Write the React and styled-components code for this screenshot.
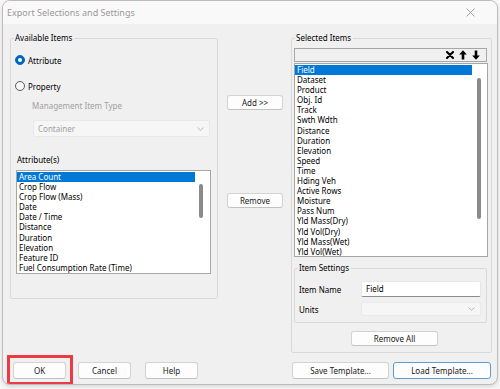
import React from 'react';
import styled, { createGlobalStyle } from 'styled-components';

const GlobalStyle = createGlobalStyle`
  html, body {
    margin: 0;
    padding: 0;
    background: #f7f7f7;
  }
  body {
    font-family: "Noto Sans", "Liberation Sans", sans-serif;
    font-size: 8px;
    color: #000;
  }
  * {
    box-sizing: border-box;
  }
`;

const Desktop = styled.div`
  width: 500px;
  height: 389px;
  overflow: hidden;
`;

const Window = styled.div`
  margin-left: 2px;
  width: 496px;
  height: 385px;
  border: 1px solid #bcbcbc;
  border-radius: 8px;
  background: #f0f0f0;
  overflow: hidden;
  display: flex;
  flex-direction: column;
  box-shadow: 0 2px 4px rgba(0, 0, 0, 0.12);
`;

const TitleBar = styled.div`
  height: 23px;
  flex: none;
  background: #f9f9f9;
  display: flex;
  align-items: center;
  justify-content: space-between;
  padding: 0 22px 0 4px;
`;

const Title = styled.span`
  font-size: 9px;
  color: #9a9a9a;
`;

const Body = styled.div`
  display: flex;
  flex-direction: column;
  padding: 8px 5px 0 7px;
`;

const Columns = styled.div`
  display: flex;
  align-items: flex-start;
`;

const Group = styled.fieldset`
  margin: 0;
  margin-left: ${({ $ml }) => $ml || 0}px;
  margin-top: ${({ $mt }) => $mt || 0}px;
  padding: 0;
  width: ${({ $w }) => $w}px;
  height: ${({ $h }) => $h}px;
  border: 1px solid #d9d9d9;
  border-radius: 2px;
  display: flex;
  flex-direction: column;
  min-width: 0;
`;

const Legend = styled.legend`
  margin-left: 3px;
  padding: 0 2px 0 1px;
  line-height: 12px;
  font-size: 8px;
`;

const RadioRow = styled.label`
  display: flex;
  align-items: center;
  gap: 3px;
  height: 12px;
  margin-top: ${({ $mt }) => $mt}px;
  padding-left: 4px;
`;

const RadioDot = styled.span`
  width: 10px;
  height: 10px;
  border-radius: 50%;
  flex: none;
  background: ${({ $on }) => ($on ? '#0067c0' : '#f7f7f7')};
  border: 1px solid ${({ $on }) => ($on ? '#0067c0' : '#5a5a5a')};
  display: flex;
  align-items: center;
  justify-content: center;
  &::after {
    content: '';
    display: ${({ $on }) => ($on ? 'block' : 'none')};
    width: 4px;
    height: 4px;
    border-radius: 50%;
    background: #fff;
  }
`;

const Caption = styled.div`
  height: 12px;
  line-height: 12px;
  margin-top: ${({ $mt }) => $mt}px;
  padding-left: ${({ $pl }) => $pl}px;
  color: ${({ $muted }) => ($muted ? '#a0a0a0' : '#000')};
`;

const Combo = styled.div`
  margin-top: ${({ $mt }) => $mt || 0}px;
  margin-left: ${({ $ml }) => $ml || 0}px;
  width: ${({ $w }) => $w}px;
  height: ${({ $h }) => $h}px;
  flex: none;
  background: #f6f6f6;
  border: 1px solid #e9e9e9;
  border-radius: 2px;
  display: flex;
  align-items: center;
  justify-content: space-between;
  padding: 0 5px 0 4px;
  color: #a0a0a0;
`;

const ListBox = styled.div`
  margin-top: ${({ $mt }) => $mt}px;
  margin-left: ${({ $ml }) => $ml}px;
  width: ${({ $w }) => $w}px;
  height: ${({ $h }) => $h}px;
  flex: none;
  background: #fff;
  border: 1px solid #a6a6a6;
  display: flex;
  overflow: hidden;
`;

const Items = styled.div`
  flex: 1;
  padding-top: 1px;
  min-width: 0;
`;

const Item = styled.div`
  height: 10.1px;
  line-height: 10.1px;
  padding-left: 2px;
  white-space: nowrap;
  background: ${({ $sel }) => ($sel ? '#0078d7' : 'transparent')};
  color: ${({ $sel }) => ($sel ? '#fff' : '#000')};
`;

const ScrollTrack = styled.div`
  width: 15px;
  flex: none;
`;

const Thumb = styled.div`
  width: 4px;
  margin-left: ${({ $ml }) => $ml}px;
  margin-top: ${({ $top }) => $top}px;
  height: ${({ $h }) => $h}px;
  border-radius: 2px;
  background: #8a8a8a;
`;

const MidCol = styled.div`
  width: 56px;
  margin-left: 9px;
  display: flex;
  flex-direction: column;
`;

const Button = styled.button`
  margin: 0;
  margin-top: ${({ $mt }) => $mt || 0}px;
  margin-left: ${({ $ml }) => $ml || 0}px;
  width: ${({ $w }) => $w}px;
  height: ${({ $h }) => $h || 17}px;
  padding: 0;
  flex: none;
  background: #fdfdfd;
  border: 1px solid ${({ $focus }) => ($focus ? '#5a9bdc' : '#d3d3d3')};
  border-bottom-color: ${({ $focus }) => ($focus ? '#5a9bdc' : '#c2c2c2')};
  border-radius: 3px;
  font-family: inherit;
  font-size: 8px;
  color: #1b1b1b;
`;

const Toolbar = styled.div`
  margin-top: 4px;
  margin-left: 2px;
  width: 193px;
  height: 14px;
  border: 1px solid #a6a6a6;
  display: flex;
  align-items: center;
  justify-content: flex-end;
  gap: 5px;
  padding-right: 6px;
`;

const FieldRow = styled.div`
  display: flex;
  align-items: center;
  margin-top: ${({ $mt }) => $mt}px;
  padding-left: 4px;
`;

const FieldLabel = styled.span`
  width: 62px;
  flex: none;
`;

const TextInput = styled.div`
  width: 120px;
  height: 16px;
  background: #fff;
  border: 1px solid #e6e6e6;
  border-bottom-color: #8c8c8c;
  border-radius: 2px;
  padding: 1px 0 0 4px;
  line-height: 11px;
`;

const Footer = styled.div`
  margin-top: 9px;
  display: flex;
  justify-content: space-between;
  padding-right: 1px;
`;

const ButtonSet = styled.div`
  display: flex;
  align-items: center;
`;

const Highlighted = styled.div`
  position: relative;
  margin-left: 3px;
  &::after {
    content: '';
    position: absolute;
    inset: -7px -7px -6px -6px;
    border: 3px solid #ec3b43;
    pointer-events: none;
  }
`;

const Chevron = () => (
  <svg width="7" height="4" viewBox="0 0 7 4">
    <path d="M0.5 0.5 L3.5 3.3 L6.5 0.5" fill="none" stroke="#b0b0b0" strokeWidth="0.9" />
  </svg>
);

const CloseIcon = () => (
  <svg width="9" height="9" viewBox="0 0 9 9">
    <path d="M0.5 0.5 L8.5 8.5 M8.5 0.5 L0.5 8.5" stroke="#9a9a9a" strokeWidth="0.9" />
  </svg>
);

const DeleteIcon = () => (
  <svg width="8" height="8" viewBox="0 0 8 8">
    <path d="M1 1 L7 7 M7 1 L1 7" stroke="#000" strokeWidth="2.1" strokeLinecap="round" />
  </svg>
);

const ArrowIcon = ({ down }) => (
  <svg width="8" height="10" viewBox="0 0 8 10" style={down ? { transform: 'rotate(180deg)' } : undefined}>
    <path d="M4 0.3 L7.8 4.6 L5.3 4.6 L5.3 9.6 L2.7 9.6 L2.7 4.6 L0.2 4.6 Z" fill="#000" />
  </svg>
);

const attributes = [
  'Area Count',
  'Crop Flow',
  'Crop Flow (Mass)',
  'Date',
  'Date / Time',
  'Distance',
  'Duration',
  'Elevation',
  'Feature ID',
  'Fuel Consumption Rate (Time)',
];

const selected = [
  'Field',
  'Dataset',
  'Product',
  'Obj. Id',
  'Track',
  'Swth Wdth',
  'Distance',
  'Duration',
  'Elevation',
  'Speed',
  'Time',
  'Hding Veh',
  'Active Rows',
  'Moisture',
  'Pass Num',
  'Yld Mass(Dry)',
  'Yld Vol(Dry)',
  'Yld Mass(Wet)',
  'Yld Vol(Wet)',
];

const List = ({ items, thumb, ...box }) => (
  <ListBox {...box}>
    <Items>
      {items.map((name, i) => (
        <Item key={name} $sel={i === 0}>
          {name}
        </Item>
      ))}
    </Items>
    <ScrollTrack>
      <Thumb $ml={thumb.left} $top={thumb.top} $h={thumb.height} />
    </ScrollTrack>
  </ListBox>
);

const App = () => {
  return (
    <Desktop>
      <GlobalStyle />
      <Window>
        <TitleBar>
          <Title>Export Selections and Settings</Title>
          <CloseIcon />
        </TitleBar>
        <Body>
          <Columns>
            <Group $w={208} $h={267}>
              <Legend>Available Items</Legend>
              <RadioRow $mt={10}>
                <RadioDot $on />
                Attribute
              </RadioRow>
              <RadioRow $mt={14}>
                <RadioDot />
                Property
              </RadioRow>
              <Caption $mt={8} $pl={21} $muted>
                Management Item Type
              </Caption>
              <Combo $mt={8} $ml={22} $w={177} $h={17}>
                Container
                <Chevron />
              </Combo>
              <Caption $mt={17} $pl={6}>
                Attribute(s)
              </Caption>
              <List
                items={attributes}
                thumb={{ left: 4, top: 13, height: 34 }}
                $mt={4}
                $ml={5}
                $w={195}
                $h={104}
              />
            </Group>

            <MidCol>
              <Button $mt={63} $w={56} $h={15}>
                Add &gt;&gt;
              </Button>
              <Button $mt={83} $w={56} $h={15}>
                Remove
              </Button>
            </MidCol>

            <Group $ml={8} $w={201} $h={321}>
              <Legend>Selected Items</Legend>
              <Toolbar>
                <DeleteIcon />
                <ArrowIcon />
                <ArrowIcon down />
              </Toolbar>
              <List
                items={selected}
                thumb={{ left: 5, top: 14, height: 141 }}
                $mt={1}
                $ml={2}
                $w={194}
                $h={194}
              />
              <Group $mt={5} $ml={2} $w={193} $h={61}>
                <Legend>Item Settings</Legend>
                <FieldRow $mt={7}>
                  <FieldLabel>Item Name</FieldLabel>
                  <TextInput>Field</TextInput>
                </FieldRow>
                <FieldRow $mt={5}>
                  <FieldLabel>Units</FieldLabel>
                  <Combo $w={120} $h={14}>
                    <span />
                    <Chevron />
                  </Combo>
                </FieldRow>
              </Group>
              <Button $mt={8} $ml={59} $w={87} $h={15}>
                Remove All
              </Button>
            </Group>
          </Columns>

          <Footer>
            <ButtonSet>
              <Highlighted>
                <Button $w={53}>OK</Button>
              </Highlighted>
              <Button $ml={12} $w={53}>
                Cancel
              </Button>
              <Button $ml={14} $w={53}>
                Help
              </Button>
            </ButtonSet>
            <ButtonSet>
              <Button $w={97}>Save Template...</Button>
              <Button $ml={4} $w={98} $focus>
                Load Template...
              </Button>
            </ButtonSet>
          </Footer>
        </Body>
      </Window>
    </Desktop>
  );
};

export default App;
